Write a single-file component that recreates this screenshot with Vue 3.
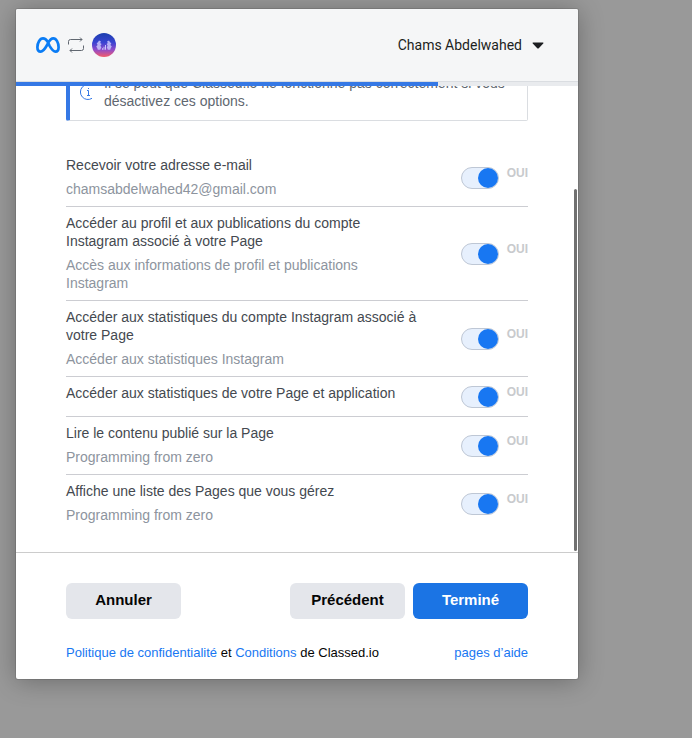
<script setup>
import { reactive } from 'vue'

const permissions = reactive([
  { id: 'email', title: 'Recevoir votre adresse e-mail', detail: 'chamsabdelwahed42@gmail.com', on: true },
  { id: 'ig-basic', title: 'Accéder au profil et aux publications du compte Instagram associé à votre Page', detail: 'Accès aux informations de profil et publications Instagram', on: true },
  { id: 'ig-insights', title: 'Accéder aux statistiques du compte Instagram associé à votre Page', detail: 'Accéder aux statistiques Instagram', on: true },
  { id: 'insights', title: 'Accéder aux statistiques de votre Page et application', detail: '', on: true },
  { id: 'engagement', title: 'Lire le contenu publié sur la Page', detail: 'Programming from zero', on: true },
  { id: 'pages', title: 'Affiche une liste des Pages que vous gérez', detail: 'Programming from zero', on: true },
])
</script>

<template>
  <div class="backdrop">
    <main class="dialog">
      <header class="top">
        <div class="logos">
          <svg class="meta" viewBox="0 0 24 16" aria-hidden="true">
            <path d="M12 5.2C10.4 2.6 8.9 1.4 7 1.4C3.8 1.4 1.4 5.9 1.4 10.2C1.4 13 2.6 14.6 4.7 14.6C7 14.6 8.3 13 10.8 8.5L12 6.2C13.9 2.8 15.2 1.4 17.3 1.4C20.3 1.4 22.6 5.7 22.6 10.2C22.6 13 21.4 14.6 19.5 14.6C17.3 14.6 16 13.1 13.4 8.6L12 5.2" fill="none" stroke="#0a7cf5" stroke-width="2.7" stroke-linejoin="round" />
          </svg>
          <svg class="swap" viewBox="0 0 16 16" fill="none" stroke="#606770" stroke-width="1" aria-hidden="true">
            <path d="M0.5 7.5V4.5Q0.5 2.5 2.5 2.5H14M12 0.5L14 2.5L12 4.5" />
            <path d="M15.5 8.5V11.5Q15.5 13.5 13.5 13.5H2M4 11.5L2 13.5L4 15.5" />
          </svg>
          <svg class="app" viewBox="0 0 24 24" aria-hidden="true">
            <defs>
              <linearGradient id="app-fill" x1="0" y1="0" x2="0" y2="1">
                <stop offset="0" stop-color="#1b3fae" />
                <stop offset="0.4" stop-color="#3a43d2" />
                <stop offset="0.7" stop-color="#914bc9" />
                <stop offset="1" stop-color="#f45b69" />
              </linearGradient>
            </defs>
            <circle cx="12" cy="12" r="12" fill="url(#app-fill)" />
            <g fill="#c9c4fa">
              <path d="M7 7.5L9 8.5L8.2 10L9.6 11L8.4 12.8L9.4 14.2L8.2 16.8H5.8L5.2 15L4.2 13.4L5.6 12L4.6 10L5.8 9.4Z" opacity="0.85" />
              <path d="M17 7.5L15 8.5L15.8 10L14.6 11L15.6 12.8L14.8 14.2L15.8 16.8H18.2L18.8 15L19.8 13.4L18.4 12L19.4 10L18.2 9.4Z" opacity="0.85" />
              <path d="M10 15.2H11V16.8H10ZM11.5 13.8H12.5V16.8H11.5ZM13 12H14V16.8H13Z" />
            </g>
          </svg>
        </div>
        <button class="account" type="button">
          <span>Chams Abdelwahed</span>
          <svg class="caret" viewBox="0 0 12 7" aria-hidden="true"><path d="M1 0.5H11Q11.8 0.7 11.2 1.5L7 6Q6 7 5 6L0.8 1.5Q0.2 0.7 1 0.5Z" fill="#1c1e21" /></svg>
        </button>
      </header>
      <div class="progress"><div class="progress-done"></div></div>

      <section class="scroller">
        <div class="content">
          <div class="notice">
            <svg class="info" viewBox="0 0 16 16" fill="none" stroke="#3578e5" aria-hidden="true">
              <path d="M12 1.7A7.5 7.5 0 1 0 12 14.3" />
              <path d="M7 6.5H8.5V11M7 11.5H10M8 4.5H9" />
            </svg>
            <p>Il se peut que Classed.io ne fonctionne pas correctement si vous désactivez ces options.</p>
          </div>
          <ul class="list">
            <li v-for="item in permissions" :key="item.id" class="row">
              <label class="text" :for="item.id">
                <span class="title">{{ item.title }}</span>
                <span v-if="item.detail" class="detail">{{ item.detail }}</span>
              </label>
              <div class="control">
                <input :id="item.id" v-model="item.on" class="toggle" type="checkbox" />
                <span class="state">{{ item.on ? 'OUI' : 'NON' }}</span>
              </div>
            </li>
          </ul>
        </div>
        <div class="thumb"></div>
      </section>

      <footer class="bottom">
        <div class="actions">
          <button class="btn" type="button">Annuler</button>
          <button class="btn push" type="button">Précédent</button>
          <button class="btn primary" type="button">Terminé</button>
        </div>
        <div class="legal">
          <p><a href="#">Politique de confidentialité</a> et <a href="#">Conditions</a> de Classed.io</p>
          <a href="#">pages d’aide</a>
        </div>
      </footer>
    </main>
  </div>
</template>

<style>
body {
  background: #999;
}
</style>

<style scoped>
.backdrop {
  box-sizing: border-box;
  height: 100vh;
  padding: 9px 114px 59px 16px;
  background: #999;
  font-family: "Liberation Sans", Arial, sans-serif;
  font-size: 14px;
  line-height: 18px;
}
.dialog {
  display: flex;
  flex-direction: column;
  height: 100%;
  background: #fff;
  border-radius: 2px;
  box-shadow: 0 2px 26px rgba(0, 0, 0, 0.3), 0 0 0 1px rgba(0, 0, 0, 0.1);
}
.top {
  display: flex;
  align-items: center;
  justify-content: space-between;
  box-sizing: border-box;
  height: 73px;
  padding: 0 34px 0 20px;
  background: #f5f6f7;
  border-bottom: 1px solid #dadde1;
  border-radius: 2px 2px 0 0;
}
.logos {
  display: flex;
  align-items: center;
  gap: 8px;
}
.meta {
  width: 24px;
  height: 16px;
}
.swap {
  width: 16px;
  height: 16px;
}
.app {
  width: 24px;
  height: 24px;
}
.account {
  display: flex;
  align-items: center;
  gap: 10px;
  padding: 0;
  border: 0;
  background: none;
  color: #1c1e21;
  font: 14px/20px Roboto, sans-serif;
}
.caret {
  width: 12px;
  height: 7px;
}
.progress {
  height: 4px;
  background: #e9ebee;
}
.progress-done {
  width: 75%;
  height: 100%;
  background: #3578e5;
}
.scroller {
  position: relative;
  display: flex;
  flex: 1;
  flex-direction: column;
  justify-content: flex-end;
  min-height: 0;
  overflow: hidden;
}
.content {
  padding: 0 50px 19px;
}
.notice {
  display: flex;
  align-items: center;
  gap: 8px;
  padding: 10px 12px 10px 10px;
  margin-bottom: 28px;
  border: 1px solid #dadde1;
  border-left: 4px solid #3578e5;
  border-radius: 2px;
  color: #606770;
}
.notice p {
  margin: 0;
}
.info {
  flex: none;
  width: 16px;
  height: 16px;
}
.list {
  margin: 0;
  padding: 0;
  list-style: none;
}
.row {
  display: flex;
  align-items: center;
  justify-content: space-between;
  gap: 40px;
  padding: 7px 0 8px;
  border-bottom: 1px solid #cccdd2;
}
.row:last-child {
  border-bottom-color: transparent;
}
.text {
  flex: 1;
  max-width: 355px;
}
.title {
  display: block;
  margin-bottom: 6px;
  color: #444950;
}
.detail {
  display: block;
  max-width: 310px;
  color: #8d949e;
}
.control {
  display: flex;
  align-items: flex-start;
  gap: 8px;
  padding-top: 2px;
}
.toggle {
  appearance: none;
  box-sizing: border-box;
  width: 38px;
  height: 22px;
  margin: 0;
  border: 1px solid #bec7d5;
  border-radius: 11px;
  background: #f5f6f7;
}
.toggle::before {
  display: block;
  width: 20px;
  height: 20px;
  border-radius: 50%;
  background: #90949c;
  content: "";
}
.toggle:checked {
  background: #e7f0fd;
}
.toggle:checked::before {
  margin-left: auto;
  background: #1877f2;
}
.state {
  color: #c8cacd;
  font-size: 12px;
  font-weight: 700;
  line-height: 12px;
}
.bottom {
  padding: 30px 50px 16px;
  border-top: 1px solid #cccccc;
}
.actions {
  display: flex;
  gap: 8px;
}
.btn {
  width: 115px;
  height: 36px;
  padding: 0 0 2px;
  border: 0;
  border-radius: 6px;
  background: #e4e6eb;
  color: #050505;
  font: 700 15px/20px "Liberation Sans", Arial, sans-serif;
}
.push {
  margin-left: auto;
}
.primary {
  background: #1b74e4;
  color: #fff;
}
.legal {
  display: flex;
  justify-content: space-between;
  margin-top: 24px;
  color: #050505;
  font-size: 13px;
  line-height: 20px;
}
.legal p {
  margin: 0;
}
.legal a {
  color: #1877f2;
  text-decoration: none;
}
.thumb {
  position: absolute;
  top: 103px;
  right: 1px;
  bottom: 1px;
  width: 3px;
  border-radius: 2px;
  background: #707070;
}
</style>
